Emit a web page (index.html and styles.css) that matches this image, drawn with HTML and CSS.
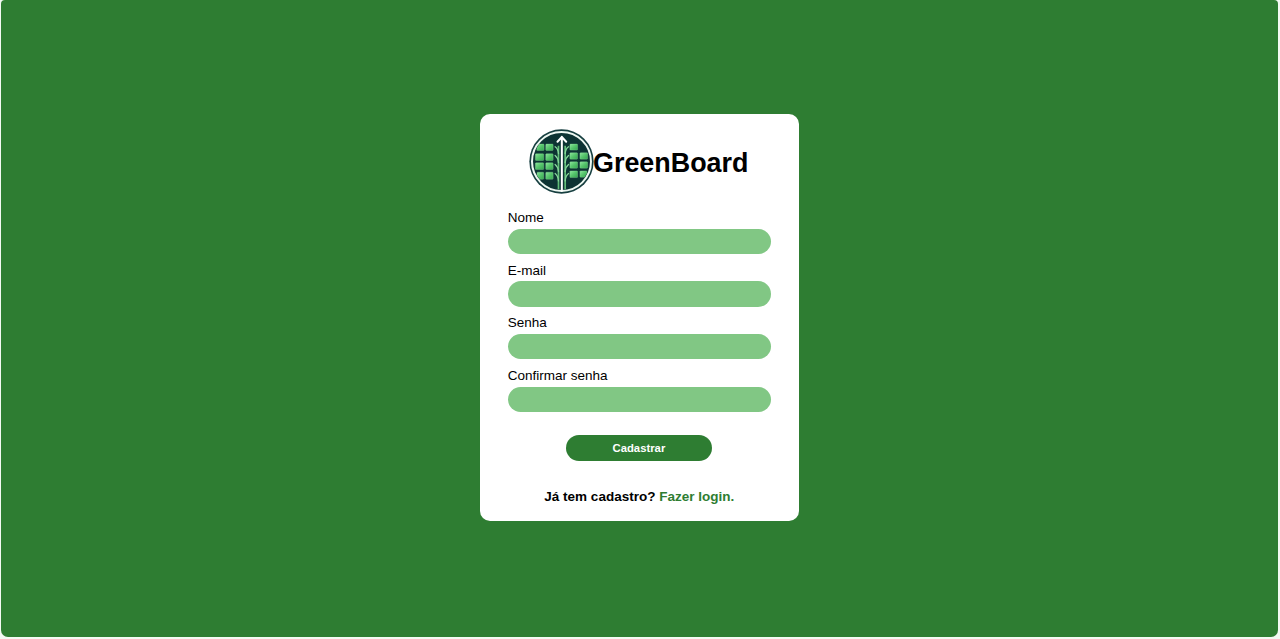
FILE: index.html
```html
<!DOCTYPE html>
<html lang="pt-BR">
<head>
<meta charset="utf-8">
<title>GreenBoard</title>
<link rel="stylesheet" href="styles.css">
</head>
<body>
<main class="page">
  <form class="card">
    <header class="brand">
      <svg class="logo" viewBox="20 20 194 194" aria-hidden="true">
        <defs>
          <clipPath id="disc"><circle cx="117" cy="117" r="84"/></clipPath>
          <linearGradient id="leaf" x1="0" y1="0" x2="1" y2="1"><stop offset="0" stop-color="#8be49a"/><stop offset=".5" stop-color="#55c46b"/><stop offset="1" stop-color="#36a450"/></linearGradient>
        </defs>
        <circle cx="117" cy="117" r="96" fill="#173f40"/>
        <circle cx="117" cy="117" r="88" fill="#0d3333" stroke="#eef8f2" stroke-width="6"/>
        <g clip-path="url(#disc)" fill="url(#leaf)" stroke="#8fe29d" stroke-width="1">
          <rect x="43" y="65" width="22" height="19" rx="2"/><rect x="70" y="65" width="22" height="19" rx="2"/>
          <rect x="39" y="94" width="25" height="20" rx="2"/><rect x="70" y="94" width="22" height="20" rx="2"/>
          <rect x="39" y="121" width="25" height="20" rx="2"/><rect x="70" y="121" width="22" height="20" rx="2"/>
          <rect x="44" y="149" width="20" height="21" rx="2"/><rect x="70" y="149" width="22" height="21" rx="2"/>
          <rect x="142" y="65" width="23" height="18" rx="2"/>
          <rect x="142" y="91" width="23" height="19" rx="2"/><rect x="172" y="91" width="23" height="19" rx="2"/>
          <rect x="142" y="118" width="23" height="19" rx="2"/><rect x="172" y="118" width="23" height="19" rx="2"/>
          <rect x="142" y="145" width="23" height="20" rx="2"/><rect x="172" y="145" width="21" height="19" rx="2"/>
        </g>
        <path d="M108 70V200M128 70V200" fill="none" stroke="#61bd78" stroke-width="5"/>
        <path d="M108 93Q107 79 98 73M108 120Q107 106 98 99M108 147Q107 133 98 126M108 175Q107 160 98 153M128 93Q129 79 138 73M128 120Q129 106 138 99M128 147Q129 133 138 126M128 175Q129 160 138 153" fill="none" stroke="#86d69a" stroke-width="4" stroke-linecap="round"/>
        <path d="M118 43V204M105 58L118 44L131 58" fill="none" stroke="#fff" stroke-width="6" stroke-linejoin="round" stroke-linecap="round"/>
      </svg>
      <h1 class="title">GreenBoard</h1>
    </header>
    <div class="fields">
      <label class="field">Nome<input class="input" type="text"></label>
      <label class="field">E-mail<input class="input" type="email"></label>
      <label class="field">Senha<input class="input" type="password"></label>
      <label class="field">Confirmar senha<input class="input" type="password"></label>
    </div>
    <button class="submit" type="button">Cadastrar</button>
    <p class="login">Já tem cadastro? <a class="link" href="#">Fazer login.</a></p>
  </form>
</main>
</body>
</html>
```
FILE: styles.css
```css
* { box-sizing: border-box; }
body {
  margin: 0;
  height: 639px;
  padding: 0 2px 2px 1px;
  overflow: hidden;
  background: #f3faf3;
  font-family: "Liberation Sans", Arial, sans-serif;
}
.page {
  height: 637px;
  padding-top: 113.5px;
  background: #2e7d32;
  border-radius: 4px 4px 7px 7px;
}
.card {
  width: 319.5px;
  height: 407px;
  margin: 0 auto;
  padding: 15px 28px 0;
  display: flex;
  flex-direction: column;
  align-items: center;
  background: #fff;
  border-radius: 10px;
}
.brand { display: flex; align-items: center; height: 65px; margin-right: 2px; }
.logo { display: block; width: 65px; height: 65px; }
.title { margin: 3px 0 0 -0.5px; font-size: 26.9px; line-height: 32px; }
.fields { width: 100%; margin-top: 15.5px; display: grid; gap: 7.7px; }
.field { display: block; font-size: 13.5px; line-height: 18px; }
.input {
  display: block;
  width: 100%;
  height: 25.5px;
  margin: 1.5px 0 0;
  padding: 0 12px;
  border: 0;
  border-radius: 13px;
  background: #81c784;
}
.submit {
  width: 146px;
  height: 25.5px;
  margin: 23.3px 1.2px 0 0;
  padding: 0;
  border: 0;
  border-radius: 13px;
  background: #2e7d32;
  color: #fff;
  font: bold 11.3px "Liberation Sans", Arial, sans-serif;
}
.login { margin: 27px 0.5px 0 0; font-size: 13.5px; font-weight: bold; line-height: 18px; white-space: nowrap; }
.link { color: #2e7d32; text-decoration: none; }
```
